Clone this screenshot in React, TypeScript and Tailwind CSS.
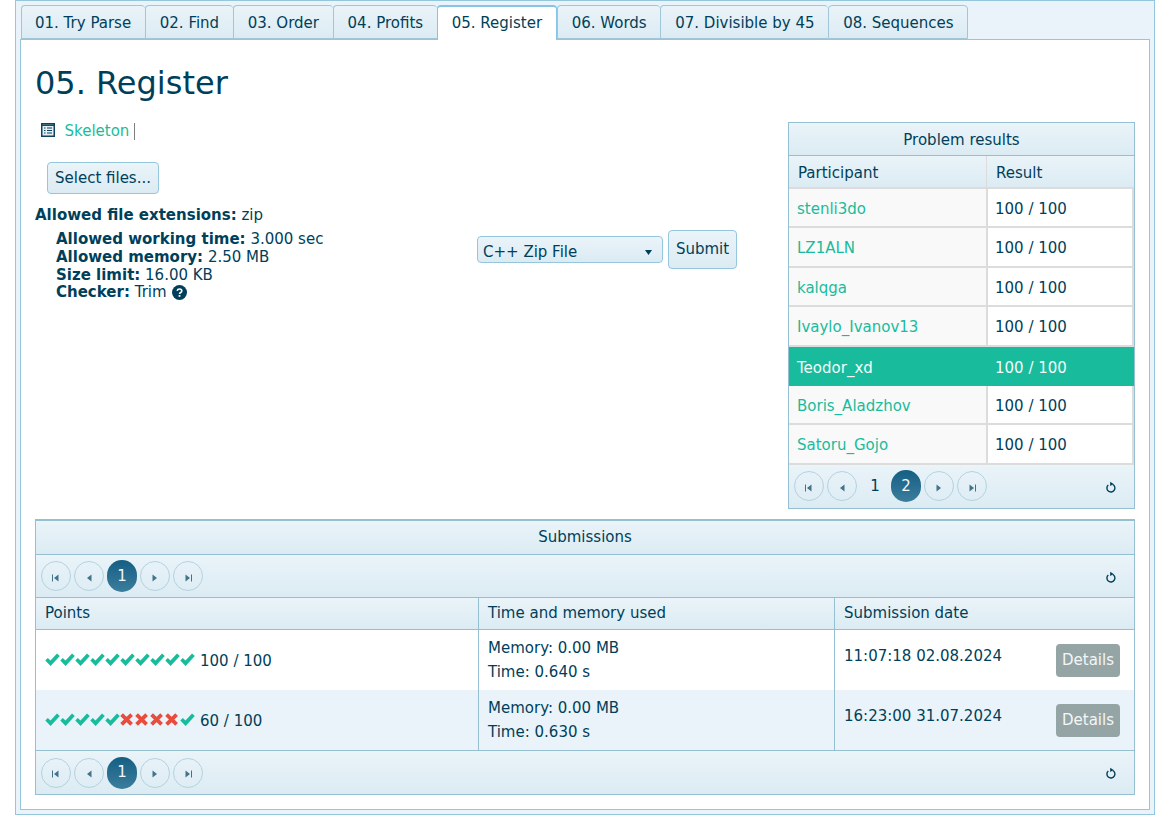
const tabs = ['01. Try Parse', '02. Find', '03. Order', '04. Profits', '05. Register', '06. Words', '07. Divisible by 45', '08. Sequences'];

const results = [
  { name: 'stenli3do' },
  { name: 'LZ1ALN' },
  { name: 'kalqga' },
  { name: 'Ivaylo_Ivanov13' },
  { name: 'Teodor_xd', active: true },
  { name: 'Boris_Aladzhov' },
  { name: 'Satoru_Gojo' },
];

function Seek({ dir, bar }: { dir: 'left' | 'right'; bar?: boolean }) {
  return (
    <svg width="10" height="10" viewBox="0 0 10 10" className="mt-[3px] opacity-70" fill="#003f5a">
      {dir === 'left' ? <path d="M7.5 1.5v7L3 5z" /> : <path d="M2.5 1.5v7L7 5z" />}
      {bar && (dir === 'left' ? <rect x="1" y="1.5" width="1" height="7" /> : <rect x="8" y="1.5" width="1" height="7" />)}
    </svg>
  );
}

function CircleButton({ children }: { children: React.ReactNode }) {
  return (
    <span className="flex h-[30px] w-[30px] items-center justify-center rounded-full border border-[#b3d2e0]">
      {children}
    </span>
  );
}

function Refresh() {
  return (
    <svg width="12" height="13" viewBox="0 0 12 13" fill="none" stroke="#003f5a" strokeWidth="1.4" className="mt-[2px]">
      <path d="M7.6 3.4A4 4 0 1 1 3.3 4" />
      <path d="M5.2 0.8v4.2l3.4-2.1z" fill="#003f5a" stroke="none" />
    </svg>
  );
}

function ListIcon() {
  return (
    <svg width="14" height="14" viewBox="0 0 14 14" className="-mt-[2px]">
      <rect x="0.75" y="0.75" width="12.5" height="12.5" fill="#e6eef2" stroke="#0d4460" strokeWidth="1.5" />
      <path d="M1 2.2h12" stroke="#0d4460" strokeWidth="1.5" />
      <path d="M3 5h1.5M6 5h5M3 7.5h1.5M6 7.5h5M3 10h1.5M6 10h5" stroke="#0d4460" strokeWidth="1.1" />
    </svg>
  );
}

function QuestionIcon() {
  return (
    <svg width="15" height="15" viewBox="0 0 15 15" className="-mt-[2px]">
      <circle cx="7.5" cy="7.5" r="7.5" fill="#003f5a" />
      <path d="M5.2 5.8c.2-1.2 1.1-1.8 2.3-1.8 1.3 0 2.3.8 2.3 1.9 0 1.6-2.2 1.6-2.2 3" fill="none" stroke="#fff" strokeWidth="1.6" />
      <rect x="6.6" y="10" width="1.8" height="1.8" fill="#fff" />
    </svg>
  );
}

function Pager({ pages, current }: { pages: number[]; current: number }) {
  return (
    <div className="flex h-full items-center justify-between bg-gradient-to-b from-[#eaf4f9] to-[#dcebf3] pl-[5px] pr-[17px]">
      <div className="flex items-center gap-[3px]">
        <CircleButton><Seek dir="left" bar /></CircleButton>
        <CircleButton><Seek dir="left" /></CircleButton>
        {pages.map((p) =>
          p === current ? (
            <span key={p} className="flex h-[32px] w-[30px] items-center justify-center rounded-full bg-gradient-to-b from-[#135f84] to-[#3b7d9c] text-[#f2f8fb]">
              {p}
            </span>
          ) : (
            <span key={p} className="flex h-[32px] w-[28px] items-center justify-center pl-[2px]">{p}</span>
          ),
        )}
        <CircleButton><Seek dir="right" /></CircleButton>
        <CircleButton><Seek dir="right" bar /></CircleButton>
      </div>
      <Refresh />
    </div>
  );
}

function Marks({ marks }: { marks: string }) {
  return (
    <span className="-mt-[2px] flex">
      {marks.split('').map((m, i) =>
        m === 'y' ? (
          <svg key={i} width="15" height="13" viewBox="0 0 15 13" fill="#18bc9c">
            <path d="M0.3 7.4 2.8 5 5.5 7.6 12 0.6 14.8 3 5.6 13z" />
          </svg>
        ) : (
          <svg key={i} width="15" height="13" viewBox="0 0 15 13" fill="none" stroke="#e74c3c" strokeWidth="3.8">
            <path d="M1.6 1.6 11.6 11.4M11.6 1.6 1.6 11.4" />
          </svg>
        ),
      )}
    </span>
  );
}

function SubmissionRow({ marks, points, time, date, shaded }: { marks: string; points: string; time: string; date: string; shaded?: boolean }) {
  return (
    <div className={`grid h-[60px] grid-cols-[442px_356px_1fr] ${shaded ? 'bg-[#e9f3f9]' : 'bg-white'}`}>
      <div className="flex items-center gap-[5px] pl-[9px]">
        <Marks marks={marks} />
        <span className="pt-[2px]">{points}</span>
      </div>
      <div className="border-l border-[#94c0d2] pl-[9px] pt-[6px] leading-[24px]">
        <div>Memory: 0.00 MB</div>
        <div>Time: {time}</div>
      </div>
      <div className="flex border-l border-[#94c0d2] pl-[9px] pr-[14px]">
        <span className="pt-[14px] leading-[24px]">{date}</span>
        <span className="ml-auto mt-[14px] flex h-[33px] w-[64px] items-center justify-center rounded-[4px] bg-[#95a5a6] text-[#f2f6f7]">Details</span>
      </div>
    </div>
  );
}

export default function App() {
  return (
    <div className="h-[815px] w-[1170px] overflow-hidden bg-white font-['DejaVu_Sans',sans-serif] text-[15px] text-[#003f5a]">
      <div className="ml-[15px] h-[815px] w-[1140px] border border-[#94c6dc] bg-[#e9f3f9] px-[4px] pt-[4px]">
        <div className="flex h-[34px] pl-[1px]">
          {tabs.map((t) =>
            t.startsWith('05') ? (
              <div key={t} className="z-10 flex h-[35px] items-center rounded-t-[4px] border border-t-2 border-b-0 border-[#85c5e3] bg-white px-[13.75px]">{t}</div>
            ) : (
              <div key={t} className="flex items-center rounded-t-[4px] border border-r-0 border-[#a0c6d8] bg-gradient-to-b from-[#eaf4f9] to-[#dcebf3] px-[13.8px] pt-[2px] first:pl-[13px] last:border-r">{t}</div>
            ),
          )}
        </div>
        <div className="h-[771px] border border-[#94c6dc] bg-white px-[14px]">
          <h1 className="pt-[22px] text-[32px] leading-[42px]">05. Register</h1>
          <div className="flex items-start">
            <div className="w-[753px]">
              <div className="flex items-center pl-[6px] pt-[16px] leading-[22px]">
                <ListIcon />
                <span className="ml-[9.5px] text-[#18bc9c]">Skeleton</span>
                <span className="ml-[5px] h-[17px] border-l border-[#808080]" />
              </div>
              <div className="pl-[12px] pt-[20px]">
                <span className="inline-flex h-[32px] w-[112px] items-center justify-center rounded-[4px] border border-[#94c6dc] bg-gradient-to-b from-[#eaf4f9] to-[#dcebf3]">Select files...</span>
              </div>
              <div className="pt-[12px] leading-[18px]"><b>Allowed file extensions:</b> zip</div>
              <div className="flex items-start">
                <div className="w-[442px] pl-[21px] pt-[7px] leading-[17.8px]">
                  <div><b>Allowed working time:</b> 3.000 sec</div>
                  <div><b>Allowed memory:</b> 2.50 MB</div>
                  <div><b>Size limit:</b> 16.00 KB</div>
                  <div className="flex items-center gap-[5px]"><span><b>Checker:</b> Trim</span><QuestionIcon /></div>
                </div>
                <div className="flex items-start gap-[5px] pt-[6px]">
                  <span className="mt-[6px] flex h-[27px] w-[186px] items-center justify-between rounded-[4px] border border-[#94c6dc] bg-gradient-to-b from-[#eaf4f9] to-[#dcebf3] pl-[5px] pr-[10px] pt-[5px]">
                    C++ Zip File
                    <svg width="7" height="5" viewBox="0 0 7 5" fill="#003f5a" className="mt-[1px]"><path d="M0 0h7L3.5 5z" /></svg>
                  </span>
                  <span className="flex h-[39px] w-[69px] items-center justify-center rounded-[4px] border border-[#94c6dc] bg-gradient-to-b from-[#eaf4f9] to-[#dcebf3]">Submit</span>
                </div>
              </div>
            </div>
            <div className="mt-[18px] w-[347px] border border-[#94c0d2]">
              <div className="flex h-[33px] items-center justify-center border-b border-[#94c0d2] bg-gradient-to-b from-[#eaf4f9] to-[#dcebf3] pt-[2px]">Problem results</div>
              <div className="grid h-[33px] grid-cols-[197px_1fr] border-b-2 border-[#dcdcdc] bg-gradient-to-b from-[#eaf4f9] to-[#dcebf3]">
                <div className="flex items-center pl-[9px] pt-[3px]">Participant</div>
                <div className="flex items-center border-l border-[#dcdcdc] pl-[9px] pt-[3px]">Result</div>
              </div>
              {results.map((r) => (
                <div key={r.name} className={`grid h-[39.4px] grid-cols-[197px_1fr] ${r.active ? 'bg-[#18bc9c] text-[#f4fbfa]' : 'border-b-2 border-[#dcdcdc]'}`}>
                  <div className={`flex items-center pl-[8px] pt-[3px] ${r.active ? '' : 'bg-[#f9f9f9] text-[#18bc9c]'}`}>{r.name}</div>
                  <div className={`flex items-center pt-[3px] ${r.active ? 'pl-[9px]' : 'border-x-2 border-[#dcdcdc] bg-white pl-[7px]'}`}>100 / 100</div>
                </div>
              ))}
              <div className="h-[43.5px]">
                <Pager pages={[1, 2]} current={2} />
              </div>
            </div>
          </div>
          <div className="mt-[10px] w-[1100px] border border-t-2 border-[#94c0d2]">
            <div className="flex h-[34px] items-center justify-center border-b border-[#94c0d2] bg-gradient-to-b from-[#eaf4f9] to-[#dcebf3]">Submissions</div>
            <div className="h-[43px] border-b border-[#94c0d2]">
              <Pager pages={[1]} current={1} />
            </div>
            <div className="grid h-[32px] grid-cols-[442px_356px_1fr] border-b border-[#94c0d2] bg-gradient-to-b from-[#eaf4f9] to-[#dcebf3]">
              <div className="flex items-center pl-[9px]">Points</div>
              <div className="flex items-center border-l border-[#94c0d2] pl-[9px]">Time and memory used</div>
              <div className="flex items-center border-l border-[#94c0d2] pl-[9px]">Submission date</div>
            </div>
            <SubmissionRow marks="yyyyyyyyyy" points="100 / 100" time="0.640 s" date="11:07:18 02.08.2024" />
            <SubmissionRow marks="yyyyynnnny" points="60 / 100" time="0.630 s" date="16:23:00 31.07.2024" shaded />
            <div className="h-[44px] border-t border-[#94c0d2]">
              <Pager pages={[1]} current={1} />
            </div>
          </div>
        </div>
      </div>
    </div>
  );
}
